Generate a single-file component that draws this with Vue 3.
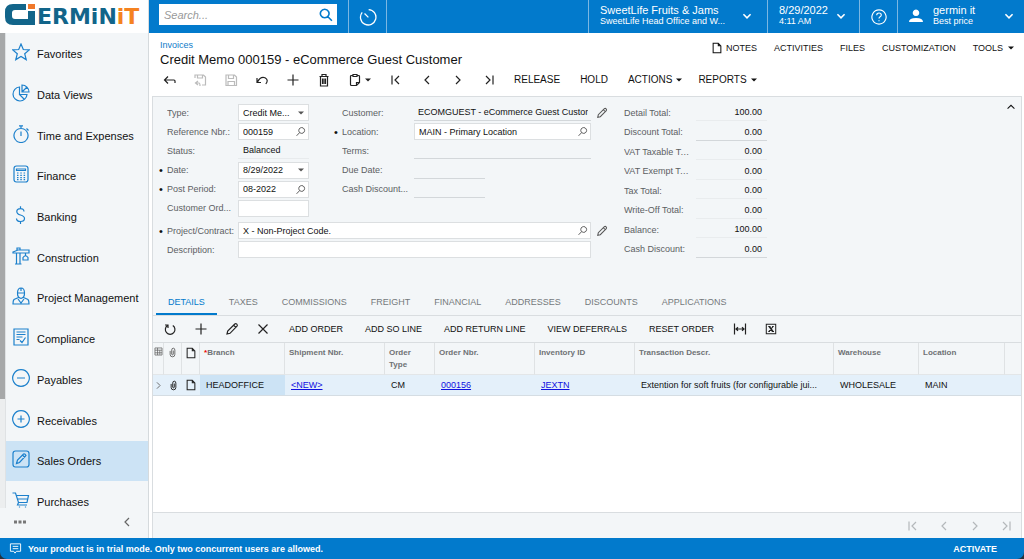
<script setup>
import { h, ref } from 'vue'

const paths = {
  star: 'M9 1l2.3 5.500 6 .4-4.600 3.800 1.500 5.900L9 13.400l-5.200 3.200 1.500-5.900L.7 6.900l6-.4z',
  pie: 'M7.500 3A7 7 0 1 0 15 10.500H7.500zM7.500 10.500l5 5M10 1v7h7a7 7 0 0 0-7-7zM10 8l5-5',
  watch: 'M9 3.500a7 7 0 1 0 .01 0zM7 .8h4M9 .8v2.700M9 6.500v4.500M14.500 3.500l2 2',
  calc: 'M4.500 1h9q2.500 0 2.500 2.500v11q0 2.500-2.500 2.500h-9q-2.500 0-2.500-2.500v-11q0-2.500 2.500-2.500zM4.500 4h9v1.500h-9zM5 8h1.500M8.300 8h1.500M11.600 8h1.500M5 10.300h1.500M8.300 10.300h1.500M11.600 10.300h1.500M5 12.600h1.500M8.300 12.600h1.500M11.600 12.600h1.500M5 14.700h1.500M8.300 14.700h1.500M11.600 14.700h1.500',
  dollar: 'M12 5.500C12 3.500 10.300 2.600 8.500 2.600S4.800 3.600 4.800 5.500 6.300 8.400 8.500 9s4 1.600 4 3.500-1.900 3-4 3-4-1.100-4-3.100M8.500 .2v2.400M8.500 15.500v2.400',
  crane: 'M1 5l5-2h11v3H1zM5 3V1h3v2M4.500 6v11M8 6v11M3 17h6.500M13.500 6v2.500M11 10.500q2.500-3.500 5 0v2.500h-5z',
  worker: 'M5 6h8M5.500 6q0-5 3.500-5t3.500 5M9 1v3M5.500 6.500q0 4 3.500 5 3.500-1 3.500-5M6.500 10.500l-4.500 2q-1 1-1 4.500h16q0-3.500-1-4.500l-4.500-2M6 12l3 4 3-4',
  comply: 'M2 1h14v16H2zM4.500 4h9M4.500 6.500h9M4.500 9h6M4.500 11.500h3M8 12.500l2 2 3.500-5',
  minus: 'M9 .7a8.300 8.300 0 1 0 .01 0zM5 9h8',
  plusCircle: 'M9 .7a8.300 8.300 0 1 0 .01 0zM5.500 9h7M9 5.500v7',
  edit: 'M3.500 1h11q2.500 0 2.500 2.500v11q0 2.500-2.500 2.500h-11q-2.500 0-2.500-2.500v-11q0-2.500 2.500-2.500zM4.500 13.500l1-3.500 6-6q1.500-.5 2.500 1.500l-6.500 7zM10.500 5l2.500 2.500',
  cart: 'M.5 2h3l3 9.500h8.500l1.500-7H4.500M5.500 8h10M6.500 11.500l-1 2.500h9.500M7.500 15.500v1M13.500 15.500v1',
  back: 'M6 3.500L2.500 7 6 10.500M2 7h10q1 0 1 1v2',
  saveBack: 'M2 5V2h8.500L12.500 4v8H9M4.500 2v3h5V2M5 8L2.500 10 5 12M2.500 10H6q1 0 1 3',
  save: 'M2 2h8.500l2 2v8.500H2zM4.500 2v3.500h5V2M4 12.500V8.500h6.500v4',
  undo: 'M2 5v4.500h4M2.500 9q3-6 7.500-4.300Q14 7 10.800 11',
  plus: 'M7 1.500v11M1.500 7h11',
  trash: 'M2.500 3.500h9M5 3.500v-2h4v2M3.500 3.500V13h7V3.500M5.500 5.500v5.500M7 5.500v5.500M8.500 5.500v5.500',
  copy: 'M5 2.500H3.500Q2.500 2.500 2.500 3.500V11.500Q2.500 12.500 3.500 12.500H8.500L11.500 9.500V3.500Q11.500 2.500 10.500 2.500H9M5 3.500V1.500H9V3.500zM8.500 12.500V9.500H11.500',
  first: 'M3 2.500v9M10 3L6 7l4 4',
  prev: 'M9 3L5 7l4 4',
  next: 'M5 3L9 7l-4 4',
  last: 'M11 2.500v9M4 3L8 7l-4 4',
  up: 'M3 9l4-4 4 4',
  down: 'M2 4.500l5 5 5-5',
  lens: 'M8.500 2a3.700 3.700 0 1 0 .01 0zM5.800 8.500L2 12.500',
  search: 'M5.700 1.200a4.300 4.300 0 1 0 .01 0zM8.900 8.700l4 4',
  timer: 'M7.500 1.200a6 6 0 1 1-5 2.200M4.300 4.300l3 3',
  help: 'M7 .8a6.200 6.200 0 1 0 .01 0zM5 5.500q0-2 2-2t2 1.700q0 1-1 1.500T7 8.300M7 9.800v.900',
  pencil: 'M2 12l.7-3L9.800 2q1-.8 2 .2t.2 2L5 11.300zM8.600 3.200l2.200 2.200',
  refresh: 'M9.800 3.500A4.800 4.800 0 1 1 4.500 3.500M2 3h3v3',
  close: 'M2.500 2.500l9 9M11.500 2.500l-9 9',
  fit: 'M1.500 1.500v11M12.500 1.500v11M3 7h8M5 5.200L3 7l2 1.800M9 5.200L11 7 9 8.800',
  excel: 'M1.500 1.500h11v11h-11zM4.500 4l4.500 6M9.500 4l-5 6M5.200 4l4.500 6M3.800 4h2.700M8.200 4h2M3.800 10h2M7.800 10h2.700',
  doc: 'M2.500 1.500h6L11.500 4.500v8h-9zM8.500 1.500v3h3',
  clip: 'M4 5v4.500q0 3 3 3t3-3V4q0-2.500-2-2.500T6 4v5q0 1 1 1t1-1V4.500',
  cols: 'M1.500 1.500h11v11h-11zM1.500 5h11M1.500 9h11M5.500 1.500v11M9 5v7',
  message: 'M1.500 2h11v8H8l-1.500 2L5 10H1.500zM4 4.700h6M4 7.200h6'
}

const Icon = (p) => {
  const grid = p.grid || 14
  return h('svg', {
    class: 'icon',
    width: p.size || 14,
    height: p.size || 14,
    viewBox: `0 0 ${grid} ${grid}`,
    'aria-hidden': 'true'
  }, [h('path', { d: paths[p.name] })])
}
Icon.props = ['name', 'size', 'grid']

const Caret = () =>
  h('svg', { class: 'caret', width: 6, height: 4, viewBox: '0 0 6 4', 'aria-hidden': 'true' }, [
    h('path', { d: 'M0 .5h6L3 3.500z' })
  ])

const menu = [
  ['star', 'Favorites'], ['pie', 'Data Views'], ['watch', 'Time and Expenses'],
  ['calc', 'Finance'], ['dollar', 'Banking'], ['crane', 'Construction'],
  ['worker', 'Project Management'], ['comply', 'Compliance'], ['minus', 'Payables'],
  ['plusCircle', 'Receivables'], ['edit', 'Sales Orders'], ['cart', 'Purchases']
]
const activeMenu = ref('Sales Orders')

const tabs = ['DETAILS', 'TAXES', 'COMMISSIONS', 'FREIGHT', 'FINANCIAL', 'ADDRESSES', 'DISCOUNTS', 'APPLICATIONS']
const activeTab = ref('DETAILS')

const totals = [
  ['Detail Total:', '100.00'], ['Discount Total:', '0.00', true], ['VAT Taxable Total:', '0.00'],
  ['VAT Exempt Total:', '0.00'], ['Tax Total:', '0.00'], ['Write-Off Total:', '0.00'],
  ['Balance:', '100.00'], ['Cash Discount:', '0.00', true]
]

const refNbr = ref('000159')
const docDate = ref('8/29/2022')
const period = ref('08-2022')
const custOrder = ref('')
const location = ref('MAIN - Primary Location')
const project = ref('X - Non-Project Code.')
const description = ref('')
const query = ref('')
</script>

<template>
  <div class="app">
    <header class="top">
      <a class="logo" href="#" aria-label="Germinit">
        <svg width="31" height="22" viewBox="0 0 31 22" aria-hidden="true">
          <path class="teal" d="M21 0H8Q0 0 0 8v5q0 8 8 8h22V7h-7v8H10q-3 0-3-3V9q0-3 3-3h11z" />
          <path class="orange" d="M23 0h7v5h-7z" />
        </svg>
        <span class="wordmark">ERMiN<span class="tail">iT</span></span>
      </a>
      <div class="search-zone">
        <form class="search" @submit.prevent>
          <input v-model="query" type="text" placeholder="Search..." aria-label="Search" />
          <button type="submit" aria-label="Search"><Icon name="search" /></button>
        </form>
      </div>
      <button class="top-btn timer" aria-label="Recent"><Icon name="timer" :size="18" /></button>
      <div class="filler"></div>
      <button class="top-btn company">
        <span class="two-line"><span class="big">SweetLife Fruits &amp; Jams</span><span class="small">SweetLife Head Office and W...</span></span>
        <Icon name="down" :size="10" />
      </button>
      <button class="top-btn date">
        <span class="two-line"><span class="big">8/29/2022</span><span class="small">4:11 AM</span></span>
        <Icon name="down" :size="10" />
      </button>
      <button class="top-btn help" aria-label="Help"><Icon name="help" :size="16" /></button>
      <button class="top-btn user">
        <svg class="person" width="14" height="14" viewBox="0 0 14 14" aria-hidden="true">
          <path d="M7 .5a3.300 3.300 0 1 1-.01 0zM0 13q0-4 7-4t7 4z" />
        </svg>
        <span class="two-line"><span class="big">germin it</span><span class="small">Best price</span></span>
        <Icon name="down" :size="10" />
      </button>
    </header>

    <div class="body">
      <nav class="side">
        <div class="side-scroll">
          <div class="track"><div class="thumb"></div></div>
          <ul>
            <li v-for="[icon, name] in menu" :key="name">
              <a href="#" :class="{ on: name === activeMenu }" @click.prevent="activeMenu = name">
                <Icon :name="icon" :size="18" :grid="18" /><span>{{ name }}</span>
              </a>
            </li>
          </ul>
        </div>
        <div class="side-foot">
          <button aria-label="More"><svg width="12" height="4" viewBox="0 0 12 4"><path class="dots" d="M0 .5h3v3H0zM4.500 .5h3v3h-3zM9 .5h3v3H9z" /></svg></button>
          <button aria-label="Collapse menu"><Icon name="prev" /></button>
        </div>
      </nav>

      <main class="page">
        <div class="page-head">
          <div class="heading">
            <a href="#" class="crumb">Invoices</a>
            <h1>Credit Memo 000159 - eCommerce Guest Customer</h1>
          </div>
          <div class="links">
            <button><Icon name="doc" :size="12" />NOTES</button>
            <button>ACTIVITIES</button>
            <button>FILES</button>
            <button>CUSTOMIZATION</button>
            <button class="with-caret">TOOLS <Caret /></button>
          </div>
        </div>
        <div class="toolbar">
          <button class="ib" aria-label="Back"><Icon name="back" /></button>
          <button class="ib" disabled aria-label="Save and close"><Icon name="saveBack" /></button>
          <button class="ib" disabled aria-label="Save"><Icon name="save" /></button>
          <button class="ib" aria-label="Undo"><Icon name="undo" /></button>
          <button class="ib" aria-label="Add"><Icon name="plus" /></button>
          <button class="ib" aria-label="Delete"><Icon name="trash" /></button>
          <button class="ib wide" aria-label="Copy"><Icon name="copy" /><Caret /></button>
          <button class="ib" aria-label="First"><Icon name="first" /></button>
          <button class="ib" aria-label="Previous"><Icon name="prev" /></button>
          <button class="ib" aria-label="Next"><Icon name="next" /></button>
          <button class="ib" aria-label="Last"><Icon name="last" /></button>
          <button class="tb">RELEASE</button>
          <button class="tb">HOLD</button>
          <button class="tb drop">ACTIONS <Caret /></button>
          <button class="tb drop">REPORTS <Caret /></button>
        </div>

        <section class="panel">
          <div class="form">
            <div class="fields">
              <div class="cols">
                <div class="col">
                  <div class="row"><i></i><label for="type">Type:</label>
                    <span class="box pick"><select id="type"><option>Credit Me...</option><option>Invoice</option></select><Caret /></span></div>
                  <div class="row"><i></i><label for="ref">Reference Nbr.:</label>
                    <span class="box"><input id="ref" v-model="refNbr" type="text" /><button aria-label="Look up reference"><Icon name="lens" :size="11" /></button></span></div>
                  <div class="row"><i></i><label for="status">Status:</label><output id="status" class="line faint">Balanced</output></div>
                  <div class="row"><i>•</i><label for="date">Date:</label>
                    <span class="box"><input id="date" v-model="docDate" type="text" /><button aria-label="Pick date"><Caret /></button></span></div>
                  <div class="row"><i>•</i><label for="period">Post Period:</label>
                    <span class="box"><input id="period" v-model="period" type="text" /><button aria-label="Look up period"><Icon name="lens" :size="11" /></button></span></div>
                  <div class="row"><i></i><label for="order">Customer Ord...</label>
                    <span class="box"><input id="order" v-model="custOrder" type="text" /></span></div>
                </div>
                <div class="col second">
                  <div class="row"><i></i><label for="customer">Customer:</label><output id="customer" class="line">ECOMGUEST - eCommerce Guest Customer</output>
                    <button class="pen" aria-label="Edit customer"><Icon name="pencil" :size="12" /></button></div>
                  <div class="row"><i>•</i><label for="loc">Location:</label>
                    <span class="box"><input id="loc" v-model="location" type="text" /><button aria-label="Look up location"><Icon name="lens" :size="11" /></button></span></div>
                  <div class="row"><i></i><label for="terms">Terms:</label><output id="terms" class="line"></output></div>
                  <div class="row"><i></i><label for="due">Due Date:</label><output id="due" class="line short"></output></div>
                  <div class="row"><i></i><label for="cashd">Cash Discount...</label><output id="cashd" class="line short"></output></div>
                  <div class="row"></div>
                </div>
              </div>
              <div class="row long"><i>•</i><label for="project">Project/Contract:</label>
                <span class="box"><input id="project" v-model="project" type="text" /><button aria-label="Look up project"><Icon name="lens" :size="11" /></button></span>
                <button class="pen" aria-label="Edit project"><Icon name="pencil" :size="12" /></button></div>
              <div class="row long"><i></i><label for="desc">Description:</label>
                <span class="box"><input id="desc" v-model="description" type="text" /></span></div>
            </div>
            <dl class="totals">
              <div v-for="[name, value, dark] in totals" :key="name">
                <dt>{{ name }}</dt><dd :class="{ dark }">{{ value }}</dd>
              </div>
            </dl>
            <button class="fold" aria-label="Collapse form"><Icon name="up" :size="12" /></button>
          </div>

          <div class="tabs" role="tablist">
            <button v-for="t in tabs" :key="t" role="tab" :aria-selected="t === activeTab" :class="{ on: t === activeTab }" @click="activeTab = t">{{ t }}</button>
          </div>

          <div class="toolbar grid-bar">
            <button class="ib" aria-label="Refresh"><Icon name="refresh" /></button>
            <button class="ib" aria-label="Add row"><Icon name="plus" /></button>
            <button class="ib" aria-label="Edit row"><Icon name="pencil" /></button>
            <button class="ib" aria-label="Delete row"><Icon name="close" /></button>
            <button class="tb">ADD ORDER</button>
            <button class="tb">ADD SO LINE</button>
            <button class="tb">ADD RETURN LINE</button>
            <button class="tb">VIEW DEFERRALS</button>
            <button class="tb">RESET ORDER</button>
            <button class="ib" aria-label="Fit to screen"><Icon name="fit" /></button>
            <button class="ib" aria-label="Export to Excel"><Icon name="excel" :size="12" /></button>
          </div>

          <div class="grid">
            <table>
              <colgroup>
                <col class="w11" /><col class="w18" /><col class="w18" /><col class="w85" /><col class="w100" /><col class="w50" />
                <col class="w100" /><col class="w100" /><col /><col class="w85" /><col class="w86" /><col class="w16" />
              </colgroup>
              <thead>
                <tr>
                  <th class="ic"><Icon name="cols" :size="9" /></th>
                  <th class="ic"><Icon name="clip" :size="11" /></th>
                  <th class="ic dk"><Icon name="doc" :size="12" /></th>
                  <th class="req"><b>*</b>Branch</th>
                  <th>Shipment Nbr.</th>
                  <th>Order Type</th>
                  <th>Order Nbr.</th>
                  <th>Inventory ID</th>
                  <th>Transaction Descr.</th>
                  <th>Warehouse</th>
                  <th>Location</th>
                  <th></th>
                </tr>
              </thead>
              <tbody>
                <tr>
                  <td class="ic"><Icon name="next" :size="11" /></td>
                  <td class="ic dk"><Icon name="clip" :size="11" /></td>
                  <td class="ic dk"><Icon name="doc" :size="12" /></td>
                  <td class="sel">HEADOFFICE</td>
                  <td><a href="#">&lt;NEW&gt;</a></td>
                  <td>CM</td>
                  <td><a href="#">000156</a></td>
                  <td><a href="#">JEXTN</a></td>
                  <td>Extention for soft fruits (for configurable jui...</td>
                  <td>WHOLESALE</td>
                  <td>MAIN</td>
                  <td></td>
                </tr>
              </tbody>
            </table>
          </div>

          <div class="pager">
            <button disabled aria-label="First page"><Icon name="first" /></button>
            <button disabled aria-label="Previous page"><Icon name="prev" /></button>
            <button disabled aria-label="Next page"><Icon name="next" /></button>
            <button disabled aria-label="Last page"><Icon name="last" /></button>
          </div>
        </section>
      </main>
    </div>

    <footer class="foot">
      <div class="trial">
        <Icon name="message" :size="13" />
        <span>Your product is in trial mode. Only two concurrent users are allowed.</span>
        <button>ACTIVATE</button>
      </div>
    </footer>
  </div>
</template>

<style>
body { background: #fff; }
</style>

<style scoped>
.app {
  display: grid;
  grid-template-rows: 33px minmax(0, 1fr) auto;
  height: 100vh;
  font: 9px/12px "Liberation Sans", Arial, sans-serif;
  color: #111;
}
.app * { box-sizing: border-box; }
button {
  border: 0; padding: 0; background: none; font: inherit; color: inherit;
  display: flex; align-items: center; justify-content: center;
}
input, select {
  border: 0; padding: 0; margin: 0; background: none; font: inherit; color: inherit;
  outline: 0; min-width: 0; width: 100%; appearance: none;
}
.icon { display: block; flex: none; }
.icon :deep(path) { fill: none; stroke: currentColor; stroke-width: 1.2; }
.caret { flex: none; fill: currentColor; }

/* top bar */
.top { display: flex; background: #027acc; color: #fff; }
.logo {
  width: 149px; flex: none; background: #fff; display: flex; align-items: center;
  padding: 0 0 3px 5px; text-decoration: none; border-right: 1px solid #d8dcdf; overflow: hidden;
}
.teal { fill: #12658a; }
.orange { fill: #f0782a; }
.wordmark { font: bold 22px/24px "DejaVu Sans", sans-serif; color: #12658a; padding: 3px 0 0 1px; }
.tail { color: #f58220; }
.search-zone { flex: 0 0 200px; padding: 4px 11px 8px 10px; border-right: 1px solid #7ab7e3; }
.search { display: flex; height: 21px; background: #fff; }
.search input { font-size: 11px; color: #333; padding-left: 5px; }
.search input::placeholder { color: #999; font-style: italic; }
.search button { width: 22px; flex: none; color: #027acc; }
.search .icon :deep(path) { stroke-width: 1.6; }
.top-btn { border-right: 1px solid #7ab7e3; flex: none; text-align: left; white-space: nowrap; }
.top-btn:last-child { border-right: 0; }
.timer { width: 38px; }
.timer .icon :deep(path), .help .icon :deep(path) { stroke-width: 1; }
.filler { flex: 1; border-right: 1px solid #7ab7e3; }
.company { width: 179px; }
.date { width: 92px; }
.help { width: 38px; }
.user { width: 126px; }
.company, .date, .user { justify-content: space-between; padding: 0 15px 2px 11px; }
.date { padding-right: 13px; }
.user { padding-right: 10px; }
.two-line { display: flex; flex-direction: column; }
.big { font-size: 11px; line-height: 12px; }
.small { font-size: 9px; line-height: 11px; }
.top .company .icon :deep(path), .top .date .icon :deep(path), .top .user .icon :deep(path) { stroke-width: 2.200; }
.person { fill: #fff; margin-right: 10px; }
.user .two-line { flex: 1; }

/* side menu */
.body { display: grid; grid-template-columns: 149px minmax(0, 1fr); min-height: 0; }
.side {
  display: flex; flex-direction: column; min-height: 0;
  background: #f3f6f8; border-right: 1px solid #d5dadd;
}
.side-scroll {
  flex: 1; min-height: 0; overflow: hidden;
  display: grid; grid-template: minmax(0, 1fr) / 6px 1fr;
}
.track { background: #eceeef; border-right: 1px solid #dfe2e4; }
.thumb { height: 77%; background: #a6a8a9; }
.side ul {
  list-style: none; margin: 0; padding: 0; min-height: 489px;
  display: grid; grid-template-rows: 41px repeat(11, 1fr);
}
.side li { display: grid; }
.side a {
  display: flex; align-items: center; gap: 7px; padding: 0 0 3px 6px;
  font-size: 11px; color: #111; text-decoration: none; white-space: nowrap;
}
.side a span { padding-top: 4px; }
.side a .icon { color: #1c80cc; }
.side a.on { background: #cce3f5; }
.side-foot { height: 30px; flex: none; display: flex; justify-content: space-between; padding: 0 14px; color: #666; }
.side-foot button { height: 27px; }
.dots { fill: #777; }

/* page */
.page { display: flex; flex-direction: column; padding: 0 2px 0 3px; min-height: 0; }
.page-head { display: flex; justify-content: space-between; padding: 6px 8px 0 8px; }
.crumb { display: block; color: #0f7bc9; text-decoration: none; line-height: 12px; }
h1 { font-size: 13px; line-height: 18px; font-weight: normal; margin: 0; color: #111; }
.links { display: flex; gap: 17px; height: 18px; }
.links button { gap: 3px; white-space: nowrap; }
.links .with-caret { gap: 5px; }
.toolbar { display: flex; align-items: center; flex: none; height: 22px; padding-left: 1px; }
.page > .toolbar { margin-bottom: 5px; font-size: 10px; }
.ib { width: 31px; height: 22px; flex: none; color: #222; }
.ib.wide { width: 41px; gap: 3px; }
.ib:disabled { color: #bbb; }
.tb { padding: 0 10px; height: 22px; gap: 4px; white-space: nowrap; }
.drop { padding-right: 6px; }
.grid-bar .tb { padding: 0 11px; }

.panel {
  flex: 1; min-height: 0; display: flex; flex-direction: column;
  background: #f3f6f8; border: 1px solid #d9dde0; border-bottom: 0;
}
.form { display: flex; padding: 7px 4px 30px 5px; }
.fields { display: grid; gap: 2px; align-content: start; }
.cols { display: flex; gap: 24px; margin-bottom: 3px; }
.col { display: flex; flex-direction: column; justify-content: space-between; min-height: 113px; }
.row { display: grid; grid-template-columns: 9px 71px 71px; height: 17px; align-items: center; }
.second .row { grid-template-columns: 9px 72px 177px 22px; }
.row.long { grid-template-columns: 9px 71px 353px 22px; }
.row i { font-style: normal; font-size: 11px; padding-left: 1px; }
label, dt { color: #5c6063; white-space: nowrap; overflow: hidden; text-overflow: ellipsis; }
.box {
  display: flex; align-items: center; height: 17px; background: #fff;
  border: 1px solid #dcdfe1; padding-left: 4px;
}
.box button { width: 15px; flex: none; color: #555; }
.pick { display: grid; grid-template-columns: 1fr 15px; justify-items: center; color: #111; }
.pick .caret { color: #555; }
.line {
  height: 17px; line-height: 17px; border-bottom: 1px solid #d3d7da; padding: 0 3px 0 4px;
  white-space: nowrap; overflow: clip; overflow-clip-margin: content-box;
}
.faint { border-color: #e8ebed; padding-left: 5px; }
.short { width: 71px; }
.pen { color: #555; }
.totals {
  margin: 0 0 0 11px; display: flex; flex-direction: column; justify-content: space-between;
  min-height: 152px;
}
.totals div { display: grid; grid-template-columns: 72px 71px; height: 17px; align-items: center; }
.totals dt { padding-right: 3px; }
.totals dd { margin: 0; text-align: right; height: 17px; line-height: 17px; padding-right: 5px; border-bottom: 1px solid #e9ecee; }
.totals dd.dark { border-color: #d3d7da; }
.fold { margin-left: auto; width: 12px; height: 6px; }

.tabs { display: flex; flex: none; height: 28px; padding-left: 3px; border-bottom: 1px solid #d9dde0; }
.tabs button { padding: 3px 12px 0; color: #75797c; border-bottom: 2px solid transparent; }
.tabs .on { color: #027acc; border-color: #027acc; }
.grid-bar { height: 26px; }

.grid { flex: 1; min-height: 0; background: #fff; border-top: 1px solid #d9dde0; }
table { width: 100%; table-layout: fixed; border-collapse: separate; border-spacing: 0; }
.w11 { width: 11px; } .w16 { width: 16px; } .w18 { width: 18px; } .w50 { width: 50px; }
.w85 { width: 85px; } .w86 { width: 86px; } .w100 { width: 100px; }
th {
  height: 32px; vertical-align: top; text-align: left; font-size: 8px; line-height: 12px;
  color: #6f7275; background: #f3f6f8; padding: 4px 12px 3px 4px; border-right: 1px solid #dfe2e4;
  border-bottom: 1px solid #e3e6e8; white-space: nowrap;
}
th:nth-child(6) { white-space: normal; }
th:last-child { border-right: 0; }
.req b { color: #e00; }
td {
  height: 21px; padding: 0 6px; background: #e4f0fa; border-bottom: 1px solid #d5dde3;
  white-space: nowrap; overflow: hidden;
}
td.sel { background: #cce3f5; }
td a { color: #1111e0; }
th.ic, td.ic { padding-left: 0; padding-right: 0; overflow: hidden; color: #666; }
.ic .icon { margin: 0 auto; }
.ic.dk { color: #222; }

.pager { height: 26px; flex: none; display: flex; justify-content: flex-end; border-top: 1px solid #d9dde0; }
.pager button { width: 31px; color: #b4b8bb; }

.foot { background: #24323d; }
.trial {
  height: 21px; display: flex; align-items: center; gap: 6px; padding: 0 27px 0 9px;
  background: #027acc; color: #fff; font-weight: bold; border-radius: 0 0 7px 7px;
}
.trial .icon :deep(path) { stroke-width: 1; }
.trial button { margin-left: auto; }
</style>
